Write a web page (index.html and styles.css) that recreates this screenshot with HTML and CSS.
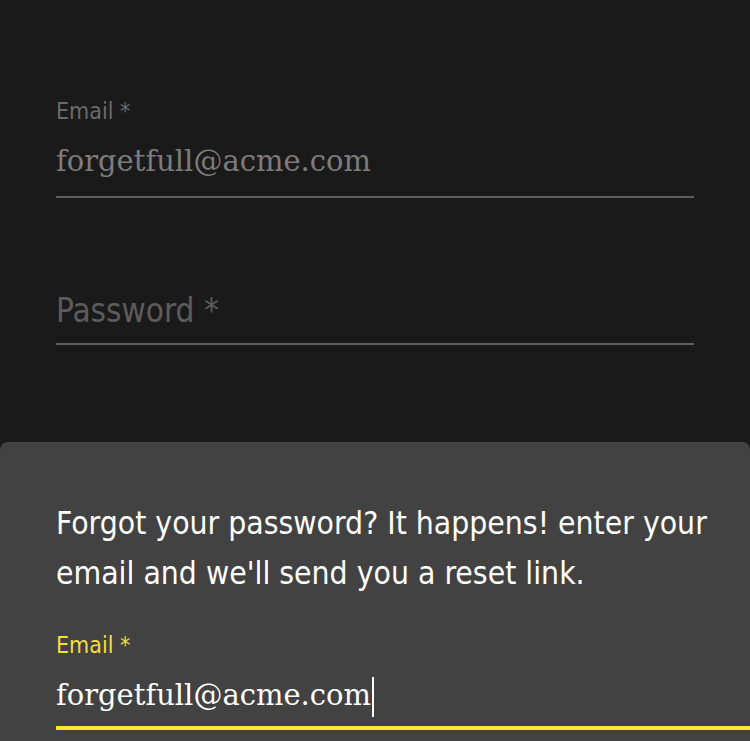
FILE: index.html
```html
<!DOCTYPE html>
<html>
<head>
<meta charset="utf-8">
<link rel="stylesheet" href="styles.css">
</head>
<body>
<main class="page">
  <form class="login">
    <div class="field">
      <label class="label">Email *</label>
      <div class="input filled">forgetfull@acme.com</div>
    </div>
    <div class="field pw">
      <div class="input placeholder">Password *</div>
    </div>
  </form>
  <section class="sheet">
    <p class="sheet-text">Forgot your password? It happens! enter your email and we'll send you a reset link.</p>
    <div class="field active">
      <label class="label">Email *</label>
      <div class="input filled">forgetfull@acme.com<span class="caret"></span></div>
    </div>
  </section>
</main>
</body>
</html>
```
FILE: styles.css
```css
html, body {
  margin: 0;
  padding: 0;
  background: #1a1a1a;
  height: 100%;
  overflow: hidden;
}
.page {
  width: 750px;
  height: 741px;
  display: flex;
  flex-direction: column;
  font-family: "DejaVu Sans Condensed", "DejaVu Sans", sans-serif;
}
.login {
  padding: 97px 56px 0 56px;
}
.label {
  display: block;
  font-size: 23px;
  line-height: 28px;
  color: #6a6a6a;
}
.input {
  font-family: "DejaVu Serif", serif;
  font-size: 29px;
  line-height: 44px;
  padding: 14px 0 13px 0;
  color: #7c7c7c;
  border-bottom: 2px solid #5e5e5e;
}
.pw {
  margin-top: 95px;
}
.placeholder {
  font-family: "DejaVu Sans Condensed", "DejaVu Sans", sans-serif;
  font-size: 33px;
  color: #5c5c5c;
  line-height: 36px;
  padding: 0 0 14px 0;
}
.sheet {
  margin-top: 97px;
  flex: 1;
  background: #424242;
  border-radius: 8px 8px 0 0;
  padding: 56px 0 0 56px;
}
.sheet-text {
  margin: 0 30px 0 0;
  font-size: 31.6px;
  line-height: 50px;
  color: #ffffff;
}
.active {
  margin-top: 33px;
}
.active .label {
  color: #f3df37;
}
.active .input {
  color: #ffffff;
  padding-bottom: 9px;
  border-bottom: 4px solid #fde635;
}
.caret {
  display: inline-block;
  width: 2px;
  height: 40px;
  background: #ffffff;
  vertical-align: middle;
  margin-left: 1px;
}
```
